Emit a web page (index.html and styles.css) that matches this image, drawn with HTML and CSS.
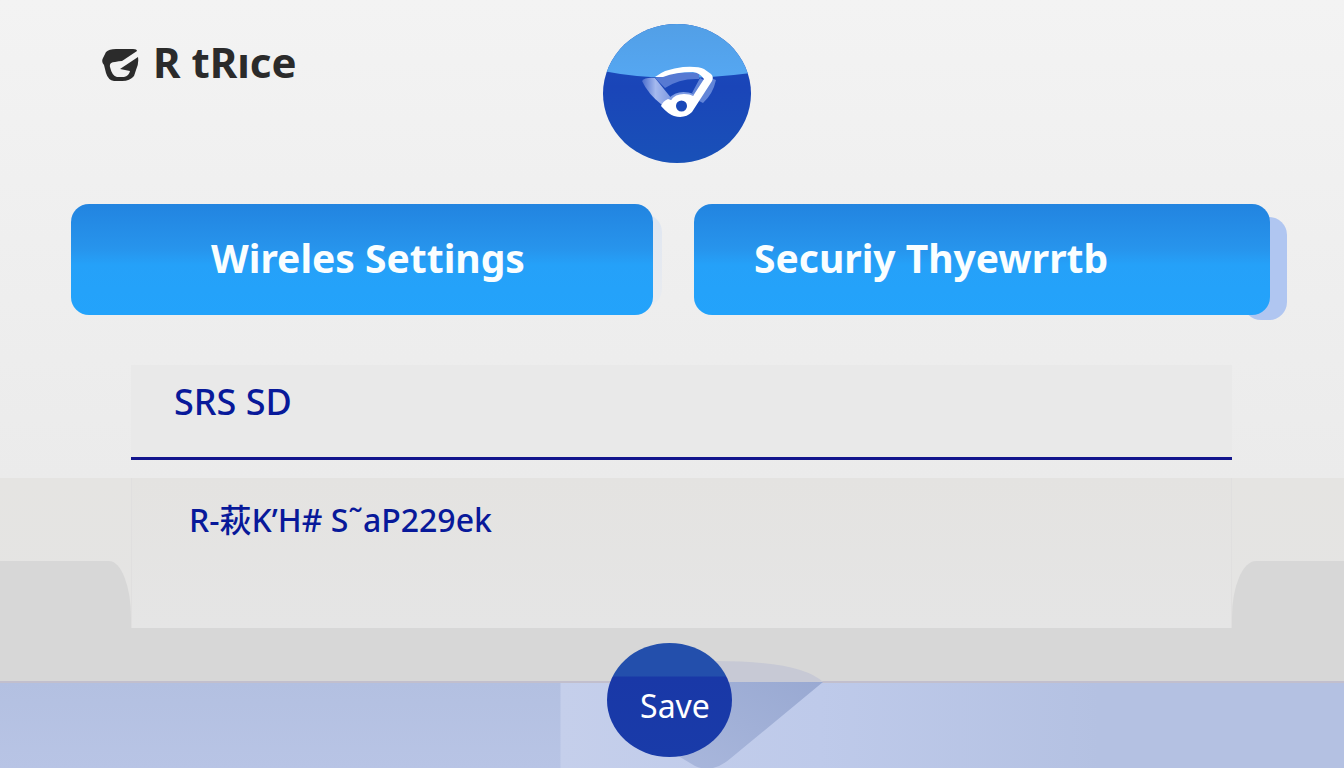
FILE: index.html
```html
<!DOCTYPE html>
<html lang="en">
<head>
<meta charset="utf-8">
<meta name="viewport" content="width=device-width, initial-scale=1">
<title>Wireles Settings</title>
<link rel="stylesheet" href="styles.css">
</head>
<body>
<header class="header">
  <div class="brand">
    <svg class="brand-mark" viewBox="0 0 37 33" aria-hidden="true">
      <path fill="#2b2b2b" d="M4 3Q7 0 14 0H31Q35 0 35 2L20 12Q17 12 13 13Q7 13 8 18Q10 27 15 28H22Q27 27 28 22L18 20L36 8Q37 15 34 21L32 27Q28 32 20 32H12Q6 31 4 24L2 16Q-1 13 1 9Z"/>
    </svg>
    <span class="brand-name">R tRıce</span>
  </div>
  <svg class="emblem" viewBox="0 0 148 139" role="img" aria-label="Wireless">
    <defs>
      <clipPath id="disc"><ellipse cx="74" cy="69.5" rx="74" ry="69.5"/></clipPath>
      <linearGradient id="deep" x1="0" y1="0" x2="0" y2="1"><stop offset="0" stop-color="#1b4fbe"/><stop offset=".45" stop-color="#1a45b8"/><stop offset="1" stop-color="#1951b8"/></linearGradient>
      <linearGradient id="sky" x1="0" y1="0" x2="0" y2="1"><stop offset="0" stop-color="#529fe6"/><stop offset="1" stop-color="#55a7f2"/></linearGradient>
      <linearGradient id="wing" x1="0" y1="0" x2="1" y2="0"><stop offset="0" stop-color="#4a6dcc"/><stop offset=".45" stop-color="#a5b9ee"/><stop offset="1" stop-color="#7d98e0"/></linearGradient>
    </defs>
    <g clip-path="url(#disc)">
      <path fill="url(#deep)" d="M0 0H148V139H0Z"/>
      <path fill="url(#sky)" d="M0 0H148V49Q110 54 74 54Q35 54 0 47Z"/>
      <path fill="url(#wing)" d="M39 57Q42 53 52 54L69 75L59 81Q45 70 39 57Z"/>
      <path fill="#5679d3" d="M52 54Q73 47 96 49V55Q77 54 62 64Z"/>
      <path fill="#6285d8" d="M97 54L103 57L94 73L89 69ZM108 54L113 56Q110 70 100 79L96 77Z"/>
      <path fill="#7d9be3" d="M65 75Q75 64 91 70L88 77Z"/>
      <path fill="#fff" fill-rule="evenodd" d="M52 53Q62 45 80 43Q95 42 101 45L108 50Q111 53 109 57L89 88Q82 95 71 92Q65 90 58 82Q60 77 65 75L68 76Q72 70 81 70Q87 70 90 72L101 55Q97 49 90 48Q73 48 60 53ZM84 82A5.500 5.500 0 1 0 73 82A5.500 5.500 0 1 0 84 82"/>
    </g>
  </svg>
</header>
<main class="main">
  <nav class="tabs">
    <button class="tab tab-wireless" type="button">Wireles Settings</button>
    <button class="tab tab-security" type="button">Securiy Thyewrrtb</button>
  </nav>
  <form class="form" id="settings">
    <div class="first-row">
      <input class="field field-name" type="text" aria-label="SRS SD" value="SRS SD">
    </div>
    <div class="second-row">
      <div class="shoulder shoulder-left"></div>
      <div class="panel">
        <input class="field field-key" type="text" aria-label="Key" value="R-萩KʼH# S˜aP229ek">
      </div>
      <div class="shoulder shoulder-right"></div>
    </div>
  </form>
</main>
<footer class="footer">
  <div class="save-wrap">
    <svg class="fin" viewBox="0 0 150 108" aria-hidden="true">
      <defs><linearGradient id="finshade" x1="1" y1="0" x2="0" y2="1"><stop offset="0" stop-color="#99a9d2"/><stop offset="1" stop-color="#a9b7dc"/></linearGradient></defs>
      <path fill="#c7c9d5" d="M40 1Q126 1 148 22H40Z"/>
      <path fill="url(#finshade)" d="M40 22H148L56 98Q38 114 20 106L0 94Z"/>
    </svg>
    <button class="save" type="submit" form="settings">Save</button>
  </div>
</footer>
</body>
</html>
```
FILE: styles.css
```css
* { box-sizing: border-box; }

body {
  margin: 0;
  min-height: 100vh;
  display: flex;
  flex-direction: column;
  overflow-x: hidden;
  background: linear-gradient(#f3f3f3, #eeeeee 300px, #ebebeb 478px);
  font-family: "Noto Sans", "Noto Sans CJK SC", sans-serif;
}

.header {
  display: grid;
  grid-template-columns: 1fr auto 1fr;
  padding: 24px 0 41px 10px;
}

.brand {
  display: flex;
  align-items: center;
  align-self: start;
  gap: 14px;
  margin-left: 92px;
  padding-top: 16px;
}

.brand-mark { width: 37px; height: 33px; margin-top: 6px; }

.brand-name {
  color: #2b2b2b;
  font: bold 42px/44px "Noto Sans", sans-serif;
}

.emblem { display: block; width: 148px; height: 139px; }

.main { flex: 1; display: flex; flex-direction: column; }

.tabs {
  display: grid;
  grid-template-columns: 582fr 576fr;
  gap: 41px;
  padding: 0 74px 50px 71px;
  isolation: isolate;
}

.tab {
  position: relative;
  height: 111px;
  border: 0;
  border-radius: 18px;
  background: linear-gradient(#2284e0, #2794ec 40%, #25a1f9 55%, #23a3fb);
  color: #fafeff;
  font: bold 39px/48px "Noto Sans", sans-serif;
}

.tab::before {
  content: "";
  position: absolute;
  z-index: -1;
  width: 44px;
}

.tab-wireless { padding: 0 0 4px 12px; }
.tab-wireless::before { top: 10px; right: -9px; bottom: 8px; border-radius: 18px; background: linear-gradient(#dfe6f1, #eaecf0); }
.tab-security { padding: 0 0 4px 60px; text-align: left; }
.tab-security::before { top: 13px; right: -17px; bottom: -5px; border-radius: 18px; background: #b0c6f1; }

.form { flex: 1; display: flex; flex-direction: column; }

.first-row { padding: 0 112px 18px 131px; }

.field {
  display: block;
  width: 100%;
  border: 0;
  outline: 0;
  background: transparent;
  color: #08199a;
  font-family: inherit;
}

.field-name {
  height: 95px;
  padding: 0 43px 20px;
  border-bottom: 3px solid #12158d;
  background: #e9e9e9;
  font-size: 36px;
  font-weight: 500;
}

.second-row {
  flex: 1;
  display: grid;
  grid-template-columns: 131px 1fr 112px;
  padding-bottom: 53px;
  background: linear-gradient(to top, #d7d7d7 53px, transparent 53px), linear-gradient(#e5e4e2, #e4e4e4);
}

.panel {
  min-height: 150px;
  border-left: 1px solid #e0dfdf;
  border-right: 1px solid #e0dfdf;
  background: linear-gradient(#e4e3e1, #e5e5e5);
}

.field-key { height: 80px; padding: 0 57px; font-size: 32px; font-weight: 500; }

.shoulder { margin-top: 83px; background: #d7d7d7; }
.shoulder-left { border-top-right-radius: 22px 56px; }
.shoulder-right { border-top-left-radius: 24px 56px; }

.footer {
  display: flex;
  justify-content: center;
  height: 87px;
  border-top: 2px solid #c2bfcd;
  background: linear-gradient(to right, transparent 560px, #c5cfeb 561px, #becaea 820px, #b4c1e2 1100px), linear-gradient(#b3c0e1, #b8c4e5);
}

.save-wrap {
  position: relative;
  width: 125px;
  height: 114px;
  margin: -40px 6px 0 0;
}

.fin { position: absolute; top: 17px; left: 68px; width: 150px; height: 108px; }

.save {
  position: relative;
  width: 100%;
  height: 100%;
  padding: 12px 0 0 12px;
  border: 0;
  border-radius: 50%;
  background: linear-gradient(#234fac 33px, #1938a7 34px, #193ba9);
  color: #fff;
  font: 32px/40px "Noto Sans", sans-serif;
}
```
